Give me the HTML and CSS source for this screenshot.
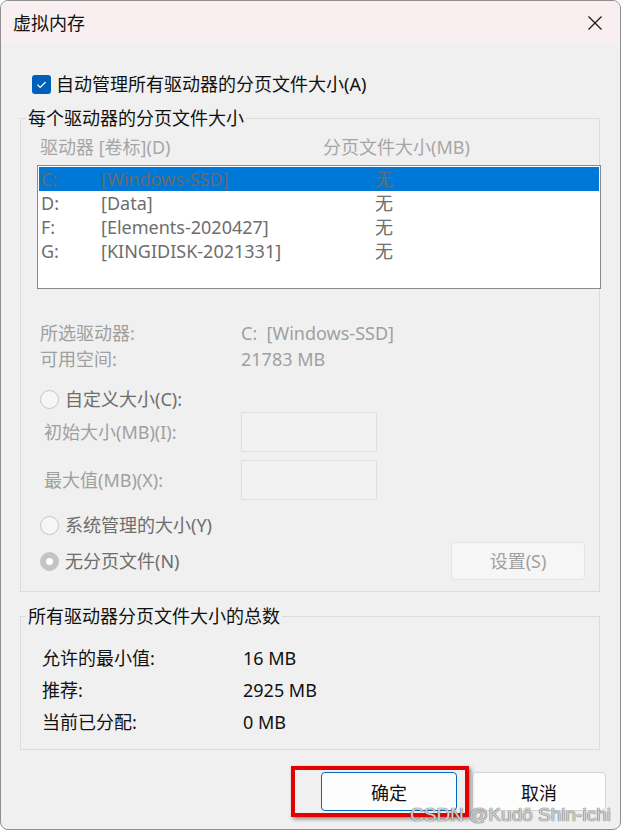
FILE: index.html
```html
<!DOCTYPE html>
<html lang="zh-CN">
<head>
<meta charset="utf-8">
<title>虚拟内存</title>
<link rel="stylesheet" href="styles.css">
</head>
<body>
<div class="window">
  <div class="titlebar">
    <span class="title">虚拟内存</span>
    <span class="close"><svg width="14" height="14" viewBox="0 0 14 14"><path d="M0.5 0.5 L13.5 13.5 M13.5 0.5 L0.5 13.5" stroke="#1b1b1b" stroke-width="1.3" fill="none"/></svg></span>
  </div>
  <div class="body">
    <div class="auto">
      <span class="checkbox"><svg width="19" height="19" viewBox="0 0 19 19"><path d="M5.5 9.8 L8.2 12.4 L13.6 7" stroke="#fff" stroke-width="1.2" fill="none"/></svg></span>
      <span>自动管理所有驱动器的分页文件大小(A)</span>
    </div>

    <fieldset class="group g1">
      <legend>每个驱动器的分页文件大小</legend>
      <div class="list-head"><span>驱动器 [卷标](D)</span><span>分页文件大小(MB)</span></div>
      <div class="listbox">
        <div class="row sel"><span>C:</span><span>[Windows-SSD]</span><span>无</span></div>
        <div class="row"><span>D:</span><span>[Data]</span><span>无</span></div>
        <div class="row"><span>F:</span><span>[Elements-2020427]</span><span>无</span></div>
        <div class="row"><span>G:</span><span>[KINGIDISK-2021331]</span><span>无</span></div>
      </div>
      <div class="info">
        <div class="kv"><span>所选驱动器:</span><span>C:&nbsp; [Windows-SSD]</span></div>
        <div class="kv"><span>可用空间:</span><span>21783 MB</span></div>
      </div>
      <div class="radio-row custom"><span class="radio"></span><span>自定义大小(C):</span></div>
      <div class="field-row"><span>初始大小(MB)(I):</span><span class="input"></span></div>
      <div class="field-row second"><span>最大值(MB)(X):</span><span class="input"></span></div>
      <div class="radio-row system"><span class="radio"></span><span>系统管理的大小(Y)</span></div>
      <div class="radio-row nofile">
        <span class="radio checked"></span><span>无分页文件(N)</span>
        <button class="set-btn" type="button">设置(S)</button>
      </div>
    </fieldset>

    <fieldset class="group g2">
      <legend>所有驱动器分页文件大小的总数</legend>
      <div class="totals">
        <div class="tv"><span>允许的最小值:</span><span>16 MB</span></div>
        <div class="tv"><span>推荐:</span><span>2925 MB</span></div>
        <div class="tv"><span>当前已分配:</span><span>0 MB</span></div>
      </div>
    </fieldset>

    <div class="buttons">
      <button class="btn ok" type="button">确定</button>
      <button class="btn cancel" type="button">取消</button>
    </div>
  </div>
  <div class="annot"></div>
  <div class="watermark">CSDN @Kudō Shin-ichi</div>
</div>
</body>
</html>
```
FILE: styles.css
```css
* { box-sizing: border-box; }
html, body { margin: 0; padding: 0; background: #ffffff; }
body {
  font-family: "Noto Sans", "Noto Sans CJK SC", sans-serif;
  font-size: 18px;
  color: #1a1a1a;
}
.window {
  position: relative;
  width: 621px;
  height: 830px;
  border: 1px solid #8f8f8f;
  border-radius: 8px;
  background: #f0f0f0;
  overflow: hidden;
}
.titlebar {
  height: 43px;
  background: #f9eff0;
  display: flex;
  align-items: center;
  justify-content: space-between;
  padding: 0 18px 0 12px;
}
.title { line-height: 20px; font-size: 18px; color: #111; }
.close { display: flex; width: 14px; height: 14px; }

.body { padding-top: 30px; }
.auto {
  display: flex;
  align-items: center;
  height: 20px;
  padding-left: 31px;
  gap: 5px;
  line-height: 20px;
  color: #111;
}
.checkbox {
  display: flex;
  width: 19px;
  height: 19px;
  border-radius: 3px;
  background: #005fb8;
}

.group {
  margin: 14px 20px 0 19px;
  padding: 0;
  border: 1px solid #dcdcdc;
  min-width: 0;
}
.group legend {
  margin-left: 5px;
  padding: 0 2px;
  line-height: 20px;
  color: #111;
}
.g1 { padding-bottom: 11px; }
.list-head {
  margin-top: 9px;
  display: grid;
  grid-template-columns: 283px 1fr;
  padding-left: 19px;
  line-height: 20px;
  color: #a6a6a6;
}
.listbox {
  margin: 8px -2px 0 16px;
  height: 124px;
  border: 1px solid #868b94;
  background: #ffffff;
  padding: 1px;
}
.row {
  display: grid;
  grid-template-columns: 60px 274px 1fr;
  padding-left: 2px;
  height: 24px;
  line-height: 24px;
  color: #6d6d6d;
}
.row.sel { background: #0078d7; color: #6a6a6a; }

.info { margin-top: 31px; }
.kv {
  display: grid;
  grid-template-columns: 201px 1fr;
  padding-left: 19px;
  height: 26px;
  line-height: 26px;
  color: #a0a0a0;
}

.radio-row {
  display: flex;
  align-items: center;
  padding-left: 19px;
  height: 26px;
  line-height: 26px;
  color: #6d6d6d;
  gap: 6px;
}
.radio {
  width: 19px;
  height: 19px;
  border-radius: 50%;
  border: 1px solid #c6c6c6;
  background: #f6f6f6;
  flex: none;
}
.radio.checked {
  background: #c4c4c4;
  border-color: #c4c4c4;
  display: flex;
  align-items: center;
  justify-content: center;
}
.radio.checked::after {
  content: "";
  width: 7px;
  height: 7px;
  border-radius: 50%;
  background: #ffffff;
}
.custom { margin-top: 14px; }
.system { margin-top: 12px; }
.nofile {
  margin-top: 4px;
  height: 38px;
  padding-right: 14px;
}
.set-btn {
  margin-left: auto;
  width: 134px;
  height: 38px;
  border: 1px solid #e4e4e4;
  border-radius: 4px;
  background: #f6f6f6;
  color: #a0a0a0;
  font: inherit;
  font-size: 18px;
}

.field-row {
  display: grid;
  grid-template-columns: 197px 136px;
  align-items: center;
  padding-left: 23px;
  height: 40px;
  color: #a0a0a0;
  line-height: 20px;
}
.field-row.second { margin-top: 8px; }
.input {
  height: 40px;
  border: 1px solid #dedede;
  background: #f2f2f2;
}

.g2 { padding-bottom: 11px; }
.totals { padding-top: 16px; }
.tv {
  display: grid;
  grid-template-columns: 201px 1fr;
  padding-left: 21px;
  height: 32px;
  line-height: 32px;
  color: #111;
}

.buttons {
  margin-top: 22px;
  display: flex;
  justify-content: flex-end;
  gap: 15px;
  padding-right: 14px;
}
.btn {
  height: 39px;
  border-radius: 4px;
  background: #fdfdfd;
  font: inherit;
  font-size: 18px;
  color: #111;
}
.ok { width: 136px; border: 1px solid #0067c0; }
.cancel { width: 134px; border: 1px solid #d4d4d4; }

.annot {
  position: absolute;
  left: 290px;
  top: 765px;
  width: 178px;
  height: 51px;
  border: 4px solid #e30000;
  box-shadow: 2px 2px 4px rgba(0,0,0,0.45);
}
.watermark {
  position: absolute;
  left: 409px;
  top: 803px;
  font-family: "Liberation Sans", Arial, sans-serif;
  font-size: 19px;
  line-height: 22px;
  color: rgba(225,225,225,0.9);
  text-shadow: 0 0 1px #5a5a5a, 0 0 1px #5a5a5a;
  white-space: nowrap;
}
```
